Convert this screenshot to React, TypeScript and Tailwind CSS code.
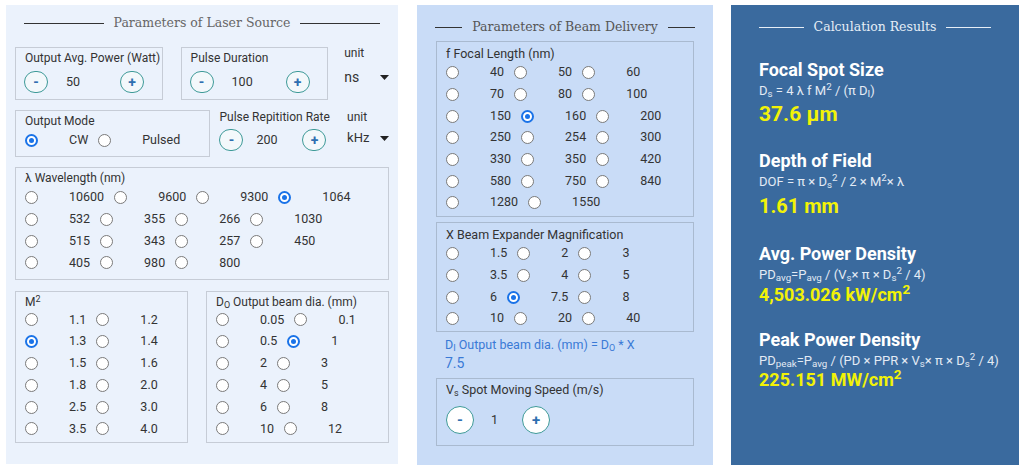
import type { ReactNode } from 'react';

const body = { fontFamily: 'Roboto, "Liberation Sans", sans-serif' };
const slab = { fontFamily: '"DejaVu Serif", "Liberation Serif", serif' };

function Radio({ checked }: { checked?: boolean }) {
  if (checked) {
    return (
      <span className="w-[13px] h-[13px] rounded-full border-[2px] border-[#1a73e8] bg-white flex items-center justify-center shrink-0">
        <span className="w-[5px] h-[5px] rounded-full bg-[#1a73e8]" />
      </span>
    );
  }
  return <span className="w-[13px] h-[13px] rounded-full border-[1.5px] border-[#7a7a7a] bg-white shrink-0" />;
}

function RadioRows({ rows, checked, rowH }: { rows: string[][]; checked: string; rowH: string }) {
  return (
    <div>
      {rows.map((row, i) => (
        <div key={i} className={`flex items-center ${rowH}`}>
          {row.map((v) => (
            <div key={v} className="flex items-center">
              <Radio checked={v === checked} />
              <span className="ml-[31px] mr-[10px]">{v}</span>
            </div>
          ))}
        </div>
      ))}
    </div>
  );
}

function SmallBtn({ sign }: { sign: string }) {
  return (
    <span className="w-[24px] h-[22px] rounded-full border-[1.5px] border-[#3e9a98] bg-[#f3f8fb] flex items-center justify-center text-[#2f6fb0] font-bold text-[14px] leading-none shrink-0">
      {sign}
    </span>
  );
}

function BigBtn({ sign }: { sign: string }) {
  return (
    <span className="w-[28px] h-[28px] rounded-full border-[1.5px] border-[#3e9a98] bg-white flex items-center justify-center text-[#2f6fb0] font-bold text-[15px] leading-none shrink-0">
      {sign}
    </span>
  );
}

function Stepper({ value, gapW, pad }: { value: string; gapW: string; pad: string }) {
  return (
    <div className="flex items-center h-[24px]">
      <SmallBtn sign="-" />
      <span className={`${gapW} ${pad}`}>{value}</span>
      <SmallBtn sign="+" />
    </div>
  );
}

function Caret() {
  return (
    <svg width="9" height="5" viewBox="0 0 9 5" className="shrink-0">
      <path d="M0 0h9L4.5 5z" fill="#222" />
    </svg>
  );
}

function Title({ text, color, line }: { text: string; color: string; line: string }) {
  return (
    <div className="flex items-center gap-[10px] h-[18px]">
      <span className={`flex-1 h-px ${line}`} />
      <span className={`text-[12.5px] whitespace-nowrap ${color}`} style={slab}>
        {text}
      </span>
      <span className={`flex-1 h-px ${line}`} />
    </div>
  );
}

function Result({
  title,
  formula,
  value,
  className,
  fMt,
  vMt,
  vSize,
}: {
  title: string;
  formula: ReactNode;
  value: ReactNode;
  className: string;
  fMt: string;
  vMt: string;
  vSize: string;
}) {
  return (
    <div className={className}>
      <div className="h-[20px] leading-[20px] text-[18px] font-bold text-white whitespace-nowrap">{title}</div>
      <div className={`h-[20px] leading-[20px] text-[13px] text-[#e3ebf5] whitespace-nowrap ${fMt}`}>{formula}</div>
      <div className={`h-[22px] leading-[22px] font-bold text-[#f2f207] whitespace-nowrap ${vSize} ${vMt}`}>{value}</div>
    </div>
  );
}

export default function App() {
  return (
    <div className="w-[1024px] h-[468px] bg-white flex items-start text-[12.5px] text-[#333]" style={body}>
      {/* Laser source */}
      <div className="w-[392px] h-[459px] mt-[5px] ml-[6px] bg-[#ebf2fc] flex flex-col">
        <div className="px-[18px] mt-[9px]">
          <Title text="Parameters of Laser Source" color="text-[#666]" line="bg-[#333]" />
        </div>
        <div className="px-[9px] flex flex-col">
          <div className="flex items-start mt-[15px]">
            <div className="w-[148px] h-[53px] border border-[#c6ccd6] pl-[9px]">
              <div className="h-[18px] leading-[18px] mt-[1px] text-[12px] whitespace-nowrap">Output Avg. Power (Watt)</div>
              <div className="mt-[3px] -ml-[1px]">
                <Stepper value="50" gapW="w-[72px]" pad="pl-[18px]" />
              </div>
            </div>
            <div className="w-[148px] h-[53px] ml-[18px] border border-[#c6ccd6] pl-[9px]">
              <div className="h-[18px] leading-[18px] mt-[1px] text-[12px]">Pulse Duration</div>
              <div className="mt-[3px] -ml-[1px]">
                <Stepper value="100" gapW="w-[72px]" pad="pl-[18px]" />
              </div>
            </div>
            <div className="ml-[16px] -mt-[3px] w-[45px]">
              <div className="h-[18px] leading-[18px] text-[12px]">unit</div>
              <div className="mt-[6px] h-[18px] flex items-center justify-between text-[14px]">
                <span>ns</span>
                <Caret />
              </div>
            </div>
          </div>

          <div className="flex items-start mt-[10px]">
            <div className="w-[196px] h-[47px] border border-[#c6ccd6] px-[9px]">
              <div className="h-[18px] leading-[18px] mt-[1px] text-[12px]">Output Mode</div>
              <RadioRows rows={[['CW', 'Pulsed']]} checked="CW" rowH="h-[21px]" />
            </div>
            <div className="ml-[9px] w-[128px]">
              <div className="h-[18px] leading-[18px] -mt-[2px] text-[12px] whitespace-nowrap">Pulse Repitition Rate</div>
              <div className="mt-[2px]">
                <Stepper value="200" gapW="w-[59px]" pad="pl-[13px]" />
              </div>
            </div>
            <div className="w-[42px]">
              <div className="h-[18px] leading-[18px] -mt-[2px] text-[12px]">unit</div>
              <div className="mt-[3px] h-[18px] flex items-center justify-between text-[13px]">
                <span>kHz</span>
                <Caret />
              </div>
            </div>
          </div>

          <div className="w-[374px] h-[113px] mt-[10px] border border-[#c6ccd6] px-[9px] pt-[2px]">
            <div className="h-[17px] leading-[17px] text-[12px]">λ Wavelength (nm)</div>
            <RadioRows
              rows={[
                ['10600', '9600', '9300', '1064'],
                ['532', '355', '266', '1030'],
                ['515', '343', '257', '450'],
                ['405', '980', '800'],
              ]}
              checked="1064"
              rowH="h-[21.7px]"
            />
          </div>

          <div className="flex items-start mt-[11px]">
            <div className="w-[173px] h-[152px] border border-[#c6ccd6] px-[9px] pt-[2px]">
              <div className="h-[15px] leading-[17px] text-[12px]">
                M<sup className="text-[9px]">2</sup>
              </div>
              <RadioRows
                rows={[
                  ['1.1', '1.2'],
                  ['1.3', '1.4'],
                  ['1.5', '1.6'],
                  ['1.8', '2.0'],
                  ['2.5', '3.0'],
                  ['3.5', '4.0'],
                ]}
                checked="1.3"
                rowH="h-[21.8px]"
              />
            </div>
            <div className="w-[183px] h-[152px] ml-[18px] border border-[#c6ccd6] px-[9px] pt-[2px]">
              <div className="h-[15px] leading-[17px] text-[12px] whitespace-nowrap">
                D<sub className="text-[9px]">O</sub> Output beam dia. (mm)
              </div>
              <RadioRows
                rows={[
                  ['0.05', '0.1'],
                  ['0.5', '1'],
                  ['2', '3'],
                  ['4', '5'],
                  ['6', '8'],
                  ['10', '12'],
                ]}
                checked="1"
                rowH="h-[21.8px]"
              />
            </div>
          </div>
        </div>
      </div>

      {/* Beam delivery */}
      <div className="w-[296px] h-[460px] mt-[5px] ml-[19px] bg-[#c9dcf7] flex flex-col">
        <div className="px-[18px] mt-[13px]">
          <Title text="Parameters of Beam Delivery" color="text-[#555]" line="bg-[#333]" />
        </div>
        <div className="px-[19px] flex flex-col">
          <div className="h-[176px] mt-[5px] border border-[#a9bad0] px-[9px] pt-[3px]">
            <div className="h-[17px] leading-[17px]">f Focal Length (nm)</div>
            <RadioRows
              rows={[
                ['40', '50', '60'],
                ['70', '80', '100'],
                ['150', '160', '200'],
                ['250', '254', '300'],
                ['330', '350', '420'],
                ['580', '750', '840'],
                ['1280', '1550'],
              ]}
              checked="160"
              rowH="h-[21.67px]"
            />
          </div>
          <div className="h-[110px] mt-[5px] border border-[#a9bad0] px-[9px] pt-[3px]">
            <div className="h-[17px] leading-[17px]">X Beam Expander Magnification</div>
            <RadioRows
              rows={[
                ['1.5', '2', '3'],
                ['3.5', '4', '5'],
                ['6', '7.5', '8'],
                ['10', '20', '40'],
              ]}
              checked="7.5"
              rowH="h-[21.67px]"
            />
          </div>
          <div className="pl-[9px] text-[#3a7ad6]">
            <div className="mt-[4px] h-[18px] leading-[18px]">
              D<sub className="text-[9px]">I</sub> Output beam dia. (mm) = D<sub className="text-[9px]">O</sub> * X
            </div>
            <div className="h-[18px] leading-[18px] text-[14px]">7.5</div>
          </div>
          <div className="h-[68px] mt-[6px] border border-[#a9bad0] px-[9px] pt-[2px]">
            <div className="h-[18px] leading-[18px]">
              V<sub className="text-[9px]">s</sub> Spot Moving Speed (m/s)
            </div>
            <div className="flex items-center mt-[7px] h-[28px]">
              <BigBtn sign="-" />
              <span className="w-[48px] pl-[17px]">1</span>
              <BigBtn sign="+" />
            </div>
          </div>
        </div>
      </div>

      {/* Results */}
      <div className="w-[288px] h-[460px] mt-[5px] ml-[18px] bg-[#3a6a9e] flex flex-col">
        <div className="px-[28px] mt-[13px]">
          <Title text="Calculation Results" color="text-[#e6eef7]" line="bg-[#e6eef7]" />
        </div>
        <div className="pl-[28px]">
          <Result
            className="mt-[24px]"
            title="Focal Spot Size"
            fMt="mt-[1px]"
            vMt="mt-[2px]"
            vSize="text-[21px]"
            formula={
              <>
                D<sub>s</sub> = 4 λ f M<sup>2</sup> / (π D<sub>I</sub>)
              </>
            }
            value="37.6 µm"
          />
          <Result
            className="mt-[26px]"
            title="Depth of Field"
            fMt="mt-[1px]"
            vMt="mt-[3px]"
            vSize="text-[20px]"
            formula={
              <>
                DOF = π × D<sub>s</sub>
                <sup>2</sup> / 2 × M<sup>2</sup>× λ
              </>
            }
            value="1.61 mm"
          />
          <Result
            className="mt-[27px]"
            title="Avg. Power Density"
            fMt="mt-[1px]"
            vMt="-mt-[1px]"
            vSize="text-[18px]"
            formula={
              <>
                PD<sub>avg</sub>=P<sub>avg</sub> / (V<sub>s</sub>× π × D<sub>s</sub>
                <sup>2</sup> / 4)
              </>
            }
            value={
              <>
                4,503.026 kW/cm<sup>2</sup>
              </>
            }
          />
          <Result
            className="mt-[24px]"
            title="Peak Power Density"
            fMt="mt-[1px]"
            vMt="-mt-[2px]"
            vSize="text-[18px]"
            formula={
              <>
                PD<sub>peak</sub>=P<sub>avg</sub> / (PD × PPR × V<sub>s</sub>× π × D<sub>s</sub>
                <sup>2</sup> / 4)
              </>
            }
            value={
              <>
                225.151 MW/cm<sup>2</sup>
              </>
            }
          />
        </div>
      </div>
    </div>
  );
}
